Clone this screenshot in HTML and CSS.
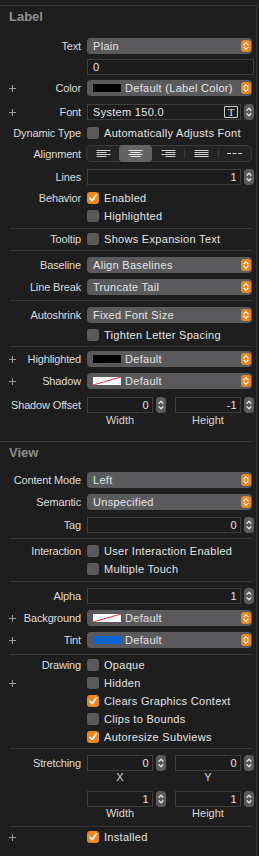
FILE: index.html
```html
<!DOCTYPE html>
<html lang="en">
<head>
    <meta charset="UTF-8">
    <meta name="viewport" content="width=device-width, initial-scale=1.0">
    <title>Attributes Inspector - Label</title>
<link rel="stylesheet" href="styles.css">
</head>
<body>
    <!-- shared glyphs -->
    <svg class="sprite" xmlns="http://www.w3.org/2000/svg">
        <symbol id="updown" viewBox="0 0 10 12">
            <path d="M3 4.8 5 2.8 7 4.8M3 7.2 5 9.2 7 7.2" fill="none" stroke="#fff" stroke-width="1.3" stroke-linecap="round" stroke-linejoin="round"/>
        </symbol>
        <symbol id="stepper" viewBox="0 0 10 16">
            <path d="M3 6.2 5 4.2 7 6.2M3 9.8 5 11.8 7 9.8" fill="none" stroke="#e4e4e4" stroke-width="1.3" stroke-linecap="round" stroke-linejoin="round"/>
        </symbol>
        <symbol id="plus" viewBox="0 0 7 7">
            <path d="M3.5 0v7M0 3.5h7" stroke="#9a9a9a" stroke-width="1"/>
        </symbol>
        <symbol id="check" viewBox="0 0 12 12">
            <path d="M3 6.3 5.1 8.7 9.2 2.8" fill="none" stroke="#fff" stroke-width="1.7" stroke-linecap="round" stroke-linejoin="round"/>
        </symbol>
        <symbol id="nocolor" viewBox="0 0 28 8">
            <rect width="28" height="8" fill="#fff"/>
            <path d="M0 8 28 0" stroke="#e8343a" stroke-width="1"/>
        </symbol>
    </svg>

    <div class="inspector">
        <div class="section-title">Label</div>

        <div class="row mt-13">
            <span class="lbl">Text</span>
            <div class="popup"><span class="value">Plain</span><svg class="arrows"><use href="#updown"/></svg></div>
        </div>
        <div class="row mt-5">
            <span class="lbl"></span>
            <div class="field wide"><span class="value">0</span></div>
        </div>
        <div class="row mt-5">
            <span class="lbl"><svg class="plus"><use href="#plus"/></svg>Color</span>
            <div class="popup"><span class="swatch black"></span><span class="value">Default (Label Color)</span><svg class="arrows"><use href="#updown"/></svg></div>
        </div>
        <div class="row mt-8">
            <span class="lbl"><svg class="plus"><use href="#plus"/></svg>Font</span>
            <div class="num full">
                <div class="field"><span class="value">System 150.0</span><span class="font-btn">T</span></div>
                <svg class="stepper"><use href="#stepper"/></svg>
            </div>
        </div>
        <div class="row check mt-7">
            <span class="lbl">Dynamic Type</span>
            <span class="cb"></span><span class="cb-text">Automatically Adjusts Font</span>
        </div>
        <div class="row seg-row">
            <span class="lbl">Alignment</span>
            <div class="segmented">
                <span class="seg">
                    <svg width="15" height="8"><path d="M0.5 0.5h14M0.5 2.5h10M0.5 4.5h14M0.5 6.5h10" stroke="#d4d4d4"/></svg>
                </span>
                <span class="seg active">
                    <svg width="15" height="8"><path d="M0.5 0.5h14M2.5 2.5h10M0.5 4.5h14M2.5 6.5h10" stroke="#e6e6e6"/></svg>
                </span>
                <span class="seg">
                    <svg width="15" height="8"><path d="M0.5 0.5h14M4.5 2.5h10M0.5 4.5h14M4.5 6.5h10" stroke="#d4d4d4"/></svg>
                </span>
                <span class="seg divided">
                    <svg width="15" height="8"><path d="M0.5 0.5h14M0.5 2.5h14M0.5 4.5h14M0.5 6.5h14" stroke="#d4d4d4"/></svg>
                </span>
                <span class="seg divided">
                    <svg width="15" height="8"><path d="M0 3.5h4M5.5 3.5h4M11 3.5h4" stroke="#d4d4d4"/></svg>
                </span>
            </div>
        </div>
        <div class="row mt-7">
            <span class="lbl">Lines</span>
            <div class="num full">
                <div class="field"><span class="value right">1</span></div>
                <svg class="stepper"><use href="#stepper"/></svg>
            </div>
        </div>
        <div class="row check mt-7">
            <span class="lbl">Behavior</span>
            <span class="cb on"><svg><use href="#check"/></svg></span><span class="cb-text">Enabled</span>
        </div>
        <div class="row check">
            <span class="lbl"></span>
            <span class="cb"></span><span class="cb-text">Highlighted</span>
        </div>

        <div class="sep mt-6"></div>
        <div class="row check mt-4">
            <span class="lbl">Tooltip</span>
            <span class="cb"></span><span class="cb-text">Shows Expansion Text</span>
        </div>

        <div class="sep"></div>
        <div class="row">
            <span class="lbl">Baseline</span>
            <div class="popup"><span class="value">Align Baselines</span><svg class="arrows"><use href="#updown"/></svg></div>
        </div>
        <div class="row">
            <span class="lbl">Line Break</span>
            <div class="popup"><span class="value">Truncate Tail</span><svg class="arrows"><use href="#updown"/></svg></div>
        </div>

        <div class="sep"></div>
        <div class="row">
            <span class="lbl">Autoshrink</span>
            <div class="popup"><span class="value">Fixed Font Size</span><svg class="arrows"><use href="#updown"/></svg></div>
        </div>
        <div class="row check">
            <span class="lbl"></span>
            <span class="cb"></span><span class="cb-text">Tighten Letter Spacing</span>
        </div>

        <div class="sep"></div>
        <div class="row mt-4">
            <span class="lbl"><svg class="plus"><use href="#plus"/></svg>Highlighted</span>
            <div class="popup"><span class="swatch black"></span><span class="value">Default</span><svg class="arrows"><use href="#updown"/></svg></div>
        </div>
        <div class="row">
            <span class="lbl"><svg class="plus"><use href="#plus"/></svg>Shadow</span>
            <div class="popup"><svg class="swatch"><use href="#nocolor"/></svg><span class="value">Default</span><svg class="arrows"><use href="#updown"/></svg></div>
        </div>
        <div class="row mt-8">
            <span class="lbl">Shadow Offset</span>
            <div class="pair">
                <div class="num"><div class="field"><span class="value right">0</span></div><svg class="stepper"><use href="#stepper"/></svg></div>
                <div class="num"><div class="field"><span class="value right">-1</span></div><svg class="stepper"><use href="#stepper"/></svg></div>
            </div>
        </div>
        <div class="row caption mt-1">
            <span class="lbl"></span>
            <div class="pair">
                <span class="cap">Width</span>
                <span class="cap">Height</span>
            </div>
        </div>

        <div class="section-sep"></div>
        <div class="section-title">View</div>

        <div class="row mt-11">
            <span class="lbl">Content Mode</span>
            <div class="popup"><span class="value">Left</span><svg class="arrows"><use href="#updown"/></svg></div>
        </div>
        <div class="row">
            <span class="lbl">Semantic</span>
            <div class="popup"><span class="value">Unspecified</span><svg class="arrows"><use href="#updown"/></svg></div>
        </div>
        <div class="row mt-7">
            <span class="lbl">Tag</span>
            <div class="num full">
                <div class="field"><span class="value right">0</span></div>
                <svg class="stepper"><use href="#stepper"/></svg>
            </div>
        </div>

        <div class="sep"></div>
        <div class="row check">
            <span class="lbl">Interaction</span>
            <span class="cb"></span><span class="cb-text">User Interaction Enabled</span>
        </div>
        <div class="row check">
            <span class="lbl"></span>
            <span class="cb"></span><span class="cb-text">Multiple Touch</span>
        </div>

        <div class="sep mt-6"></div>
        <div class="row">
            <span class="lbl">Alpha</span>
            <div class="num full">
                <div class="field"><span class="value right">1</span></div>
                <svg class="stepper"><use href="#stepper"/></svg>
            </div>
        </div>
        <div class="row">
            <span class="lbl"><svg class="plus"><use href="#plus"/></svg>Background</span>
            <div class="popup"><svg class="swatch"><use href="#nocolor"/></svg><span class="value">Default</span><svg class="arrows"><use href="#updown"/></svg></div>
        </div>
        <div class="row">
            <span class="lbl"><svg class="plus"><use href="#plus"/></svg>Tint</span>
            <div class="popup"><span class="swatch blue"></span><span class="value">Default</span><svg class="arrows"><use href="#updown"/></svg></div>
        </div>

        <div class="sep mt-6"></div>
        <div class="row check mt-4">
            <span class="lbl">Drawing</span>
            <span class="cb"></span><span class="cb-text">Opaque</span>
        </div>
        <div class="row check">
            <span class="lbl"><svg class="plus"><use href="#plus"/></svg></span>
            <span class="cb"></span><span class="cb-text">Hidden</span>
        </div>
        <div class="row check">
            <span class="lbl"></span>
            <span class="cb on"><svg><use href="#check"/></svg></span><span class="cb-text">Clears Graphics Context</span>
        </div>
        <div class="row check">
            <span class="lbl"></span>
            <span class="cb"></span><span class="cb-text">Clips to Bounds</span>
        </div>
        <div class="row check">
            <span class="lbl"></span>
            <span class="cb on"><svg><use href="#check"/></svg></span><span class="cb-text">Autoresize Subviews</span>
        </div>

        <div class="sep"></div>
        <div class="row">
            <span class="lbl">Stretching</span>
            <div class="pair">
                <div class="num"><div class="field"><span class="value right">0</span></div><svg class="stepper"><use href="#stepper"/></svg></div>
                <div class="num"><div class="field"><span class="value right">0</span></div><svg class="stepper"><use href="#stepper"/></svg></div>
            </div>
        </div>
        <div class="row caption mt-0">
            <span class="lbl"></span>
            <div class="pair">
                <span class="cap">X</span>
                <span class="cap">Y</span>
            </div>
        </div>
        <div class="row mt-8">
            <span class="lbl"></span>
            <div class="pair">
                <div class="num"><div class="field"><span class="value right">1</span></div><svg class="stepper"><use href="#stepper"/></svg></div>
                <div class="num"><div class="field"><span class="value right">1</span></div><svg class="stepper"><use href="#stepper"/></svg></div>
            </div>
        </div>
        <div class="row caption mt-0">
            <span class="lbl"></span>
            <div class="pair">
                <span class="cap">Width</span>
                <span class="cap">Height</span>
            </div>
        </div>

        <div class="sep mt-7"></div>
        <div class="row check mt-4">
            <span class="lbl"><svg class="plus"><use href="#plus"/></svg></span>
            <span class="cb on"><svg><use href="#check"/></svg></span><span class="cb-text">Installed</span>
        </div>
    </div>
</body>
</html>
```

FILE: styles.css
```css
/* Xcode attributes inspector, dark */
:root {
    --bg: #1e1e1e;
    --line: #363636;
    --label: #dcdcdc;
    --value: #e4e4e4;
    --muted: #8d8d8d;
    --control: #5a5a5c;
    --field: #1c1c1c;
    --field-border: #3e3e3e;
    --accent: #f0851c;
}

* {
    margin: 0;
    padding: 0;
    box-sizing: border-box;
}

body {
    background: var(--bg);
    color: var(--label);
    font-family: "Liberation Sans", Arial, sans-serif;
    font-size: 11px;
    line-height: 16px;
    height: 856px;
    overflow: hidden;
}

.sprite {
    display: block;
    width: 0;
    height: 0;
}

.inspector {
    width: 257px;
    height: 851px;
    margin-top: 5px;
    border-top: 1px solid var(--line);
    border-right: 1px solid var(--line);
}

.section-title {
    margin-top: 3px;
    padding-left: 9px;
    height: 16px;
    font-size: 13px;
    font-weight: bold;
    color: var(--muted);
}

/* Rows */
.row {
    display: flex;
    align-items: center;
    height: 16px;
    margin-top: 6px;
}

.row.check {
    height: 12px;
}

.row.caption {
    height: 12px;
}

.seg-row {
    height: 17px;
}

.lbl {
    flex: none;
    width: 87px;
    padding: 0 6px 0 9px;
    display: flex;
    align-items: center;
    justify-content: flex-end;
    white-space: nowrap;
    letter-spacing: -0.15px;
}

.plus {
    width: 7px;
    height: 7px;
    margin-right: auto;
}

/* Popup buttons */
.popup {
    width: 165px;
    height: 16px;
    display: flex;
    align-items: center;
    padding: 0 1px 0 6px;
    background: var(--control);
    border-radius: 4px;
    color: var(--value);
}

.value,
.cb-text {
    letter-spacing: 0.3px;
}

.popup .value {
    flex: 1;
    white-space: nowrap;
}

.arrows {
    width: 10px;
    height: 12px;
    background: var(--accent);
    border-radius: 3px;
}

.swatch {
    flex: none;
    width: 28px;
    height: 8px;
    margin-right: 4px;
}

.swatch.black {
    background: #000;
}

.swatch.blue {
    background: #0a64d6;
}

/* Text fields */
.field {
    flex: 1;
    height: 16px;
    display: flex;
    align-items: center;
    padding: 0 3px 0 5px;
    background: var(--field);
    border: 1px solid var(--field-border);
    color: var(--value);
}

.field.wide {
    flex: none;
    width: 167px;
}

.field .value {
    flex: 1;
    white-space: nowrap;
}

.field .value.right {
    text-align: right;
}

.font-btn {
    width: 14px;
    height: 12px;
    border: 1px solid #cfcfcf;
    border-radius: 1px;
    font-family: "Liberation Serif", serif;
    font-size: 11px;
    line-height: 10px;
    text-align: center;
    color: #e0e0e0;
    margin-right: -1px;
}

.num {
    display: flex;
    align-items: center;
    gap: 3px;
    width: 79px;
}

.num.full {
    width: 167px;
}

.stepper {
    flex: none;
    width: 10px;
    height: 16px;
    background: var(--control);
    border-radius: 4px;
}

.pair {
    display: flex;
    gap: 9px;
}

.cap {
    width: 79px;
    padding-right: 13px;
    text-align: center;
    line-height: 12px;
    color: #d6d6d6;
}

/* Checkboxes */
.cb {
    flex: none;
    width: 12px;
    height: 12px;
    border-radius: 3px;
    background: var(--control);
}

.cb.on {
    background: var(--accent);
}

.cb svg {
    display: block;
    width: 12px;
    height: 12px;
}

.cb-text {
    margin-left: 5px;
    white-space: nowrap;
    color: var(--value);
}

/* Alignment segmented control */
.segmented {
    width: 166px;
    height: 17px;
    margin-left: -1px;
    display: flex;
    background: #242424;
    border: 1px solid #3a3a3a;
    border-radius: 5px;
}

.seg {
    flex: 1;
    display: flex;
    align-items: center;
    justify-content: center;
    border-radius: 4px;
}

.seg.active {
    background: #636365;
    margin: -1px 0;
}

.seg.divided {
    border-left: 1px solid #3a3a3a;
    border-radius: 0;
    margin: 3px 0;
}

/* Separators */
.sep {
    height: 1px;
    margin: 5px 4px 0 10px;
    background: var(--line);
}

.section-sep {
    height: 1px;
    margin: 15px 4px 0 0;
    background: var(--line);
}

.mt-0 { margin-top: 0; }
.mt-1 { margin-top: 1px; }
.mt-4 { margin-top: 4px; }
.mt-5 { margin-top: 5px; }
.mt-6 { margin-top: 6px; }
.mt-7 { margin-top: 7px; }
.mt-8 { margin-top: 8px; }
.mt-11 { margin-top: 11px; }
.mt-13 { margin-top: 13px; }
```
